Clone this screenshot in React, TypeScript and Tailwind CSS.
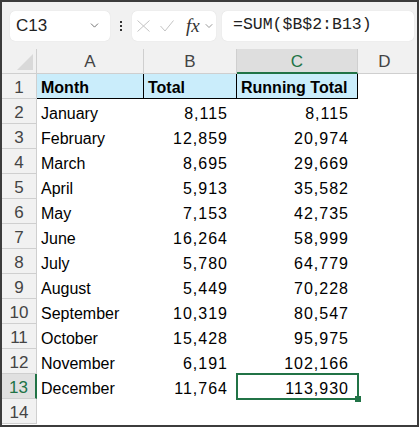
import { ChevronDown } from 'lucide-react';

const data: [string, string, string][] = [
  ['Month', 'Total', 'Running Total'],
  ['January', '8,115', '8,115'],
  ['February', '12,859', '20,974'],
  ['March', '8,695', '29,669'],
  ['April', '5,913', '35,582'],
  ['May', '7,153', '42,735'],
  ['June', '16,264', '58,999'],
  ['July', '5,780', '64,779'],
  ['August', '5,449', '70,228'],
  ['September', '10,319', '80,547'],
  ['October', '15,428', '95,975'],
  ['November', '6,191', '102,166'],
  ['December', '11,764', '113,930'],
  ['', '', ''],
];

export default function App() {
  return (
    <div className="h-[428px] w-[420px] bg-white font-['Liberation_Sans',Arial,sans-serif] text-black">
      <div className="flex h-[427px] w-[419px] flex-col border-2 border-[#3c3c3c]">
        {/* formula bar */}
        <div className="flex h-[47px] shrink-0 items-center bg-[#f1f1f1] pl-[8px] pr-[3px]">
          <div className="flex h-[30px] w-[100px] items-center justify-between rounded-[5px] bg-white pl-[6px] pr-[9px] shadow-[0_0_1px_rgba(0,0,0,0.15)]">
            <span className="text-[17px] leading-none text-[#222]">C13</span>
            <ChevronDown size={13} strokeWidth={1.5} className="text-[#555]" />
          </div>
          <div className="flex w-[22px] flex-col items-center justify-center gap-[2px]">
            <span className="h-[2px] w-[2px] bg-[#333]" />
            <span className="h-[2px] w-[2px] bg-[#333]" />
            <span className="h-[2px] w-[2px] bg-[#333]" />
          </div>
          <div className="flex h-[30px] w-[84px] items-center rounded-[5px] bg-white pl-[5px] shadow-[0_0_1px_rgba(0,0,0,0.15)]">
            <svg width="13" height="12" viewBox="0 0 13 12" fill="none" stroke="#c4c4c4" strokeWidth="1">
              <path d="M0.5 0.5 12.5 11.5M12.5 0.5 0.5 11.5" />
            </svg>
            <svg className="ml-[10px]" width="14" height="12" viewBox="0 0 14 12" fill="none" stroke="#c4c4c4" strokeWidth="1">
              <path d="M0.5 6 5 11 13.5 0.5" />
            </svg>
            <span className="ml-[12px] font-['Liberation_Serif',serif] text-[19px] italic leading-none text-[#333]">fx</span>
            <ChevronDown size={12} strokeWidth={1.5} className="ml-[3px] text-[#777]" />
          </div>
          <div className="ml-[6px] flex h-[30px] flex-1 items-center rounded-[5px] bg-white pl-[11px] shadow-[0_0_1px_rgba(0,0,0,0.15)]">
            <span className="font-['Liberation_Mono',monospace] text-[16.5px] leading-none text-[#222]">=SUM($B$2:B13)</span>
          </div>
        </div>

        {/* sheet */}
        <div className="grid grid-cols-[35px_107px_93px_121px_1fr] auto-rows-[25px] text-[16px]">
          <div className="relative border-b border-r border-[#cfcfcf] bg-[#f1f1f1]">
            <svg className="absolute bottom-[3px] right-[3px]" width="16" height="16" viewBox="0 0 16 16">
              <polygon points="16,0 16,16 0,16" fill="#d9d9d9" />
            </svg>
          </div>
          {['A', 'B'].map((c) => (
            <div key={c} className="flex items-end justify-center border-b border-r border-[#cfcfcf] bg-[#f1f1f1] pb-[2px] text-[17px] leading-[18px] text-[#444]">
              {c}
            </div>
          ))}
          <div className="flex items-end justify-center border-b-2 border-r border-b-[#217346] border-r-[#cfcfcf] bg-[#dedede] pb-[1px] text-[17px] leading-[18px] text-[#217346]">C</div>
          <div className="flex items-end justify-center border-b border-[#cfcfcf] bg-[#f1f1f1] pb-[2px] pr-[6px] text-[17px] leading-[18px] text-[#444]">D</div>

          {data.map((row, i) => {
            const n = i + 1;
            const sel = n === 13;
            return [
              <div
                key={`h${n}`}
                className={
                  sel
                    ? 'flex items-end justify-center border-b border-r-2 border-b-[#cfcfcf] border-r-[#217346] bg-[#e0e0e0] pb-px text-[17px] leading-[18px] text-[#217346]'
                    : 'flex items-end justify-center border-b border-r border-[#cfcfcf] bg-[#f1f1f1] pb-px text-[17px] leading-[18px] text-[#444]'
                }
              >
                {n}
              </div>,
              ...row.map((v, j) => {
                const head = n === 1;
                const cls = head
                  ? 'flex items-end border-b border-r border-black bg-[#caedfb] pb-px pl-[4px] font-bold leading-[18px]'
                  : j === 0
                    ? 'flex items-end pb-px pl-[4px] leading-[18px]'
                    : 'flex items-end justify-end pb-px pr-[9px] leading-[18px] tracking-[1px]';
                return (
                  <div key={`c${n}${j}`} className={`relative ${cls}`}>
                    {v}
                    {sel && j === 2 && (
                      <div className="absolute -inset-[1px] border-2 border-[#217346]">
                        <span className="absolute -bottom-[4px] -right-[4px] h-[6px] w-[6px] bg-[#217346]" />
                      </div>
                    )}
                  </div>
                );
              }),
              <div key={`d${n}`} />,
            ];
          })}
        </div>
      </div>
    </div>
  );
}
